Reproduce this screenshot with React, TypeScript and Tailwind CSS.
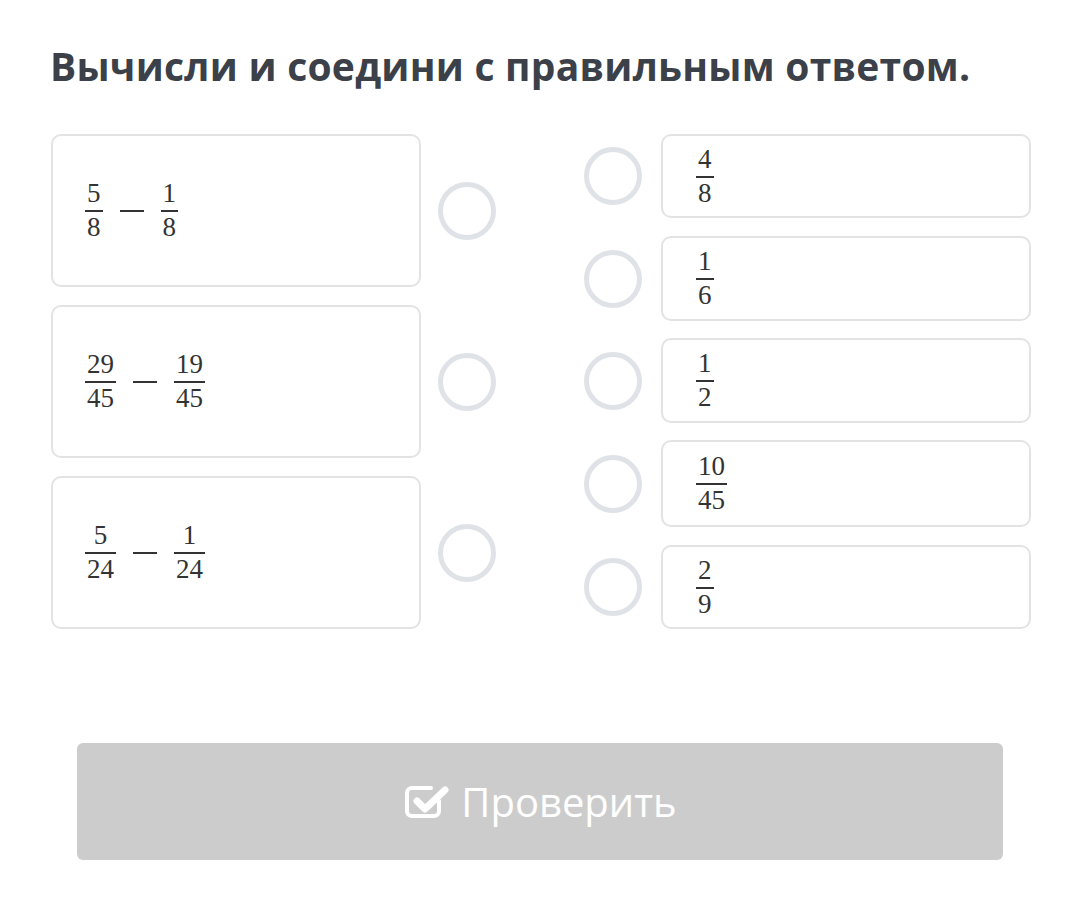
import { ReactElement } from "react";

type Frac = [string, string];

const LEFT: Frac[][] = [
  [["5", "8"], ["1", "8"]],
  [["29", "45"], ["19", "45"]],
  [["5", "24"], ["1", "24"]],
];

const RIGHT: { f: Frac; cls: string }[] = [
  { f: ["4", "8"], cls: "h-[84px]" },
  { f: ["1", "6"], cls: "h-[85px] mt-[18px]" },
  { f: ["1", "2"], cls: "h-[85px] mt-[17px]" },
  { f: ["10", "45"], cls: "h-[87px] mt-[17px]" },
  { f: ["2", "9"], cls: "h-[84px] mt-[18px]" },
];

function Fraction({ value }: { value: Frac }): ReactElement {
  const [num, den] = value;
  return (
    <span className="inline-flex flex-col items-center leading-none text-[27px] text-[#333]">
      <span className="px-[2px] pb-[3px]">{num}</span>
      <span className="h-[2px] w-full bg-[#333]" />
      <span className="px-[2px] pt-[2px]">{den}</span>
    </span>
  );
}

function Circle(): ReactElement {
  return <div className="w-[58px] h-[58px] shrink-0 rounded-full border-[5px] border-[#dfe3e7]" />;
}

function CheckIcon(): ReactElement {
  return (
    <svg width="46" height="36" viewBox="0 0 46 36" fill="none" stroke="white" strokeLinecap="round" strokeLinejoin="round">
      <path d="M36 17v10a5 5 0 0 1-5 5H9a5 5 0 0 1-5-5V9a5 5 0 0 1 5-5h19" strokeWidth="4" />
      <path d="M14 17l8 8L42 6" strokeWidth="7" />
    </svg>
  );
}

export default function App(): ReactElement {
  return (
    <div className="w-[1080px] h-[901px] bg-white px-[50px] pt-[38px]" style={{ fontFamily: '"Open Sans", sans-serif' }}>
      <h1 className="text-[39px] font-bold leading-[56px] text-[#3b4049] tracking-[0.25px]">
        Вычисли и соедини с правильным ответом.
      </h1>

      <div className="mt-[40px] flex gap-[88px]" style={{ fontFamily: '"Liberation Serif", serif' }}>
        <div className="flex flex-col gap-[18px] pl-px">
          {LEFT.map(([a, b], i) => (
            <div key={i} className="flex items-center gap-[17px]">
              <div className="w-[370px] h-[153px] rounded-[10px] border-2 border-[#e3e3e3] flex items-center pl-[32px]">
                <Fraction value={a} />
                <span className="mx-[17px] w-[24px] h-[2px] bg-[#333]" />
                <Fraction value={b} />
              </div>
              <Circle />
            </div>
          ))}
        </div>

        <div className="flex flex-col">
          {RIGHT.map(({ f, cls }, i) => (
            <div key={i} className={`flex items-center gap-[19px] ${cls}`}>
              <Circle />
              <div className="w-[370px] h-full rounded-[10px] border-2 border-[#e3e3e3] flex items-center pl-[33px]">
                <Fraction value={f} />
              </div>
            </div>
          ))}
        </div>
      </div>

      <div className="mt-[114px] mx-[27px] h-[117px] rounded-[6px] bg-[#cccccc] flex items-center justify-center gap-[12px] text-white">
        <CheckIcon />
        <span className="text-[40px] leading-none">Проверить</span>
      </div>
    </div>
  );
}
